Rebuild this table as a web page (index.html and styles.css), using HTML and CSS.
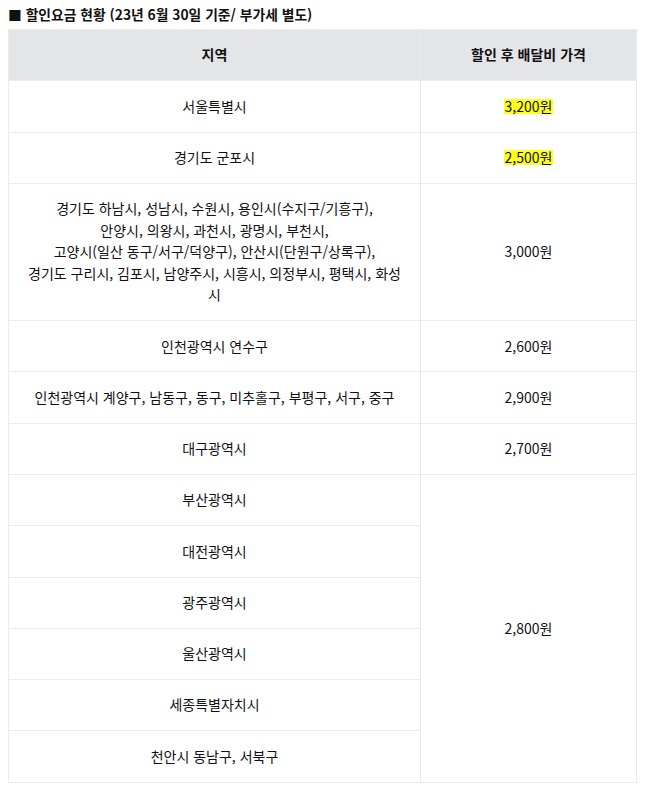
FILE: index.html
```html
<!DOCTYPE html>
<html lang="ko">
<head>
<meta charset="utf-8">
<link rel="stylesheet" href="styles.css">
</head>
<body>
<div class="page">
  <h3 class="title">■ 할인요금 현황 (23년 6월 30일 기준/ 부가세 별도)</h3>
  <table class="fee">
    <colgroup><col class="c1"><col class="c2"></colgroup>
    <thead>
      <tr><th>지역</th><th>할인 후 배달비 가격</th></tr>
    </thead>
    <tbody>
      <tr><td>서울특별시</td><td><span class="hl">3,200원</span></td></tr>
      <tr><td>경기도 군포시</td><td><span class="hl">2,500원</span></td></tr>
      <tr><td>경기도 하남시, 성남시, 수원시, 용인시(수지구/기흥구),<br>안양시, 의왕시, 과천시, 광명시, 부천시,<br>고양시(일산 동구/서구/덕양구), 안산시(단원구/상록구),<br>경기도 구리시, 김포시, 남양주시, 시흥시, 의정부시, 평택시, 화성<br>시</td><td>3,000원</td></tr>
      <tr><td>인천광역시 연수구</td><td>2,600원</td></tr>
      <tr><td>인천광역시 계양구, 남동구, 동구, 미추홀구, 부평구, 서구, 중구</td><td>2,900원</td></tr>
      <tr><td>대구광역시</td><td>2,700원</td></tr>
      <tr><td>부산광역시</td><td rowspan="6">2,800원</td></tr>
      <tr><td>대전광역시</td></tr>
      <tr><td>광주광역시</td></tr>
      <tr><td>울산광역시</td></tr>
      <tr><td>세종특별자치시</td></tr>
      <tr><td>천안시 동남구, 서북구</td></tr>
    </tbody>
  </table>
</div>
</body>
</html>
```

FILE: styles.css
```css
html, body {
  margin: 0;
  padding: 0;
  background: #ffffff;
}
.page {
  padding: 3px 8px 0 8px;
  font-family: "Noto Sans CJK KR", "Noto Sans", sans-serif;
  color: #111;
}
.title {
  margin: 0 0 4px 0;
  font-size: 13.8px;
  line-height: 22px;
  font-weight: 700;
  color: #111;
}
.fee {
  width: 628px;
  border-collapse: collapse;
  table-layout: fixed;
  font-size: 14px;
  line-height: 21.5px;
}
.c1 { width: 412px; }
.c2 { width: 216px; }
.fee th, .fee td {
  border: 1px solid #ebebeb;
  text-align: center;
  vertical-align: middle;
  padding: 14.4px 6px;
}
.fee th {
  background: #e4e5e7;
  font-weight: 700;
  color: #111;
}
.hl {
  background: #ffff1a;
  padding: 0 1px;
  line-height: 15px;
  display: inline-block;
}
```
